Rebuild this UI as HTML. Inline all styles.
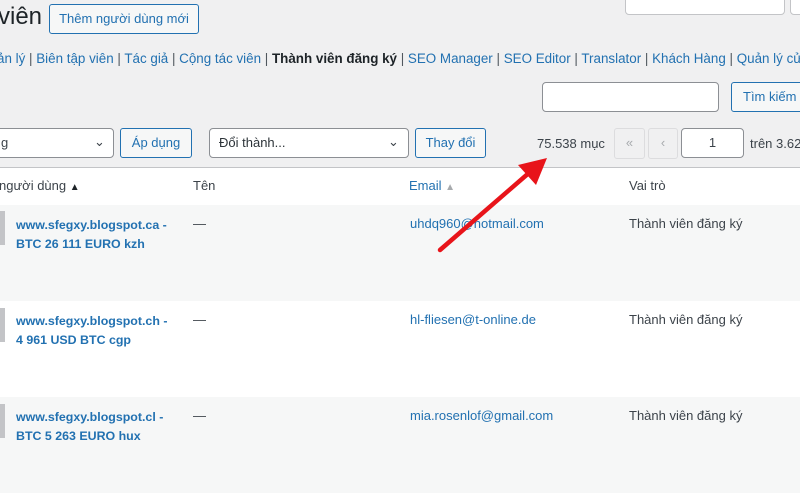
<!DOCTYPE html><html><head><meta charset="utf-8"><style>
body{margin:0;width:800px;height:465px;overflow:hidden;background:#f0f0f1;font-family:"Liberation Sans",sans-serif;font-size:13px;color:#3c434a;position:relative}
.a{position:absolute;white-space:nowrap}
.btn{position:absolute;border:1px solid #2271b1;color:#2271b1;border-radius:3px;background:#f6f7f7;font-size:13px;box-sizing:border-box;text-align:center}
.sel{position:absolute;border:1px solid #8c8f94;border-radius:4px;background:#fff;box-sizing:border-box}
.lk{color:#2271b1}
.row{position:absolute;left:0;width:800px;height:96px}
</style></head><body>
<div class="a" style="left:-2px;top:3px;font-size:24px;color:#1d2327">viên</div>
<div class="btn" style="left:49px;top:4px;width:150px;height:30px;line-height:28px">Thêm người dùng mới</div>
<div class="a" style="left:625px;top:-10px;width:158px;height:23px;background:#fff;border:1px solid #c3c4c7;border-radius:4px"></div>
<div class="a" style="left:790px;top:-10px;width:20px;height:23px;background:#fff;border:1px solid #c3c4c7;border-radius:4px"></div>
<div class="a" style="left:-3px;top:51px;color:#50575e;font-size:13.4px"><span class="lk">ản lý</span> | <span class="lk">Biên tập viên</span> | <span class="lk">Tác giả</span> | <span class="lk">Cộng tác viên</span> | <b style="color:#1d2327">Thành viên đăng ký</b> | <span class="lk">SEO Manager</span> | <span class="lk">SEO Editor</span> | <span class="lk">Translator</span> | <span class="lk">Khách Hàng</span> | <span class="lk">Quản lý cửa</span></div>
<div class="sel" style="left:542px;top:82px;width:177px;height:30px"></div>
<div class="btn" style="left:731px;top:82px;width:80px;height:30px;line-height:28px;text-align:left;padding-left:11px">Tìm kiếm n</div>
<div class="sel" style="left:-5px;top:128px;width:119px;height:30px"><span class="a" style="left:5px;top:6px">g</span><span class="a" style="left:98px;top:5px">⌄</span></div>
<div class="btn" style="left:120px;top:128px;width:72px;height:30px;line-height:28px">Áp dụng</div>
<div class="sel" style="left:209px;top:128px;width:200px;height:30px"><span class="a" style="left:9px;top:6px;color:#2c3338">Đổi thành...</span><span class="a" style="left:178px;top:5px">⌄</span></div>
<div class="btn" style="left:415px;top:128px;width:71px;height:30px;line-height:28px">Thay đổi</div>
<div class="a" style="left:537px;top:136px">75.538 mục</div>
<div class="a" style="left:614px;top:128px;width:29px;height:29px;border:1px solid #dcdcde;border-radius:3px;color:#a7aaad;text-align:center;line-height:28px">«</div>
<div class="a" style="left:648px;top:128px;width:28px;height:29px;border:1px solid #dcdcde;border-radius:3px;color:#a7aaad;text-align:center;line-height:28px">‹</div>
<div class="sel" style="left:681px;top:128px;width:63px;height:30px;text-align:center;line-height:28px">1</div>
<div class="a" style="left:750px;top:136px">trên 3.62</div>
<div class="a" style="left:0;top:167px;width:800px;height:37px;background:#fff;border-top:1px solid #c3c4c7;border-bottom:1px solid #c3c4c7"></div>
<div class="a" style="left:-1px;top:178px">người dùng <span style="font-size:10px;color:#1d2327">▲</span></div>
<div class="a" style="left:193px;top:178px">Tên</div>
<div class="a lk" style="left:409px;top:178px">Email <span style="font-size:10px;color:#a7aaad">▲</span></div>
<div class="a" style="left:629px;top:178px">Vai trò</div>
<div class="row" style="top:205px;background:#f6f7f7"></div>
<div class="row" style="top:301px;background:#fff"></div>
<div class="row" style="top:397px;background:#f6f7f7"></div>
<div class="a" style="left:0;top:211px;width:5px;height:34px;background:#c3c4c7"></div>
<div class="a" style="left:0;top:308px;width:5px;height:34px;background:#c3c4c7"></div>
<div class="a" style="left:0;top:404px;width:5px;height:34px;background:#c3c4c7"></div>
<div class="a lk" style="left:16px;top:216px;font-weight:bold;font-size:12.4px;line-height:19px">www.sfegxy.blogspot.ca -<br>BTC 26 111 EURO kzh</div>
<div class="a lk" style="left:16px;top:312px;font-weight:bold;font-size:12.4px;line-height:19px">www.sfegxy.blogspot.ch -<br>4 961 USD BTC cgp</div>
<div class="a lk" style="left:16px;top:408px;font-weight:bold;font-size:12.4px;line-height:19px">www.sfegxy.blogspot.cl -<br>BTC 5 263 EURO hux</div>
<div class="a" style="left:193px;top:216px">—</div><div class="a" style="left:193px;top:312px">—</div><div class="a" style="left:193px;top:408px">—</div>
<div class="a lk" style="left:410px;top:216px">uhdq960@hotmail.com</div>
<div class="a lk" style="left:410px;top:312px">hl-fliesen@t-online.de</div>
<div class="a lk" style="left:410px;top:408px">mia.rosenlof@gmail.com</div>
<div class="a" style="left:629px;top:216px">Thành viên đăng ký</div>
<div class="a" style="left:629px;top:312px">Thành viên đăng ký</div>
<div class="a" style="left:629px;top:408px">Thành viên đăng ký</div>
<svg class="a" style="left:0;top:0" width="800" height="465"><line x1="440" y1="250" x2="530" y2="172" stroke="#e8141a" stroke-width="4.5" stroke-linecap="round"/><polygon points="547,158 518,165 536,185" fill="#e8141a"/></svg>
</body></html>
